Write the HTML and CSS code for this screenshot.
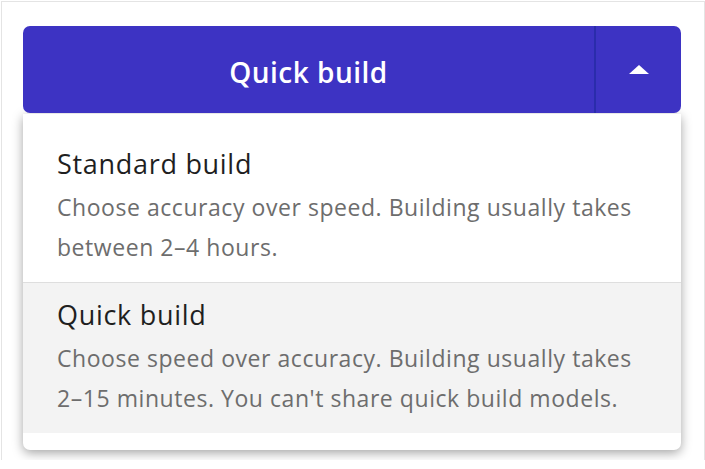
FILE: index.html
```html
<!DOCTYPE html>
<html lang="en">
<head>
<meta charset="utf-8">
<title>Build options</title>
<link rel="stylesheet" href="styles.css">
</head>
<body>
<div class="frame">
  <div class="dropdown">
    <div class="split-button">
      <div class="main-action">Quick build</div>
      <div class="divider"></div>
      <div class="toggle"><span class="caret"></span></div>
    </div>
    <ul class="menu">
      <li class="option option-first">
        <div class="option-title">Standard build</div>
        <div class="option-desc">Choose accuracy over speed. Building usually takes between 2–4 hours.</div>
      </li>
      <li class="option option-active">
        <div class="option-title">Quick build</div>
        <div class="option-desc">Choose speed over accuracy. Building usually takes 2–15 minutes. You can't share quick build models.</div>
      </li>
    </ul>
  </div>
</div>
</body>
</html>
```

FILE: styles.css
```css
html, body {
  margin: 0;
  padding: 0;
  background: #ffffff;
}

body {
  font-family: "Open Sans", "Liberation Sans", sans-serif;
}

.frame {
  box-sizing: border-box;
  width: 704px;
  height: 459px;
  margin: 1px 0 0 1px;
  border: 1px solid #e4e4e4;
  border-bottom: none;
  padding: 24px 0 0 21px;
  overflow: hidden;
}

.dropdown {
  width: 658px;
}

.split-button {
  position: relative;
  z-index: 2;
  display: flex;
  height: 87px;
  background: #3d33c3;
  border-radius: 7px;
  color: #ffffff;
}

.main-action {
  flex: 1;
  display: flex;
  align-items: center;
  justify-content: center;
  padding-top: 4px;
  box-sizing: border-box;
  font-size: 28px;
  font-weight: 600;
  letter-spacing: 0.5px;
}

.divider {
  width: 2px;
  background: #2a2cab;
}

.toggle {
  width: 85px;
  display: flex;
  align-items: center;
  justify-content: center;
}

.caret {
  width: 0;
  height: 0;
  border-left: 10px solid transparent;
  border-right: 10px solid transparent;
  border-bottom: 9px solid #ffffff;
}

.menu {
  list-style: none;
  margin: 1px 0 0 0;
  padding: 18px 0 17px 0;
  background: #ffffff;
  border-radius: 0 0 7px 7px;
  box-shadow: 0 3px 11px rgba(0, 0, 0, 0.36);
}

.option {
  padding: 15px 34px 15px 34px;
}

.option-first {
  border-bottom: 1px solid #dedede;
}

.option-active {
  background: #f3f3f3;
}

.option-title {
  font-size: 27px;
  line-height: 34px;
  letter-spacing: 0.7px;
  color: #1f1f1f;
}

.option-desc {
  margin-top: 6px;
  font-size: 23px;
  line-height: 40px;
  letter-spacing: 0.55px;
  color: #6d6d6d;
}
```
